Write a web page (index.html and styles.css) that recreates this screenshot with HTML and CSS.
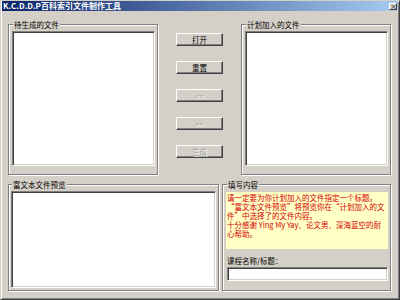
FILE: index.html
```html
<!DOCTYPE html>
<html lang="zh-CN">
<head>
  <meta charset="UTF-8">
  <title>K.C.D.D.P百科索引文件制作工具</title>
  <link rel="stylesheet" href="styles.css">
</head>
<body>
  <!-- 主窗口 -->
  <div class="window">
    <div class="titlebar">
      <span class="title">K.C.D.D.P百科索引文件制作工具</span>
      <span class="close">×</span>
    </div>

    <div class="client">
      <!-- 上半部分：文件列表与操作按钮 -->
      <div class="top-row">
        <fieldset class="group group-list">
          <legend>待生成的文件</legend>
          <div class="listbox"></div>
        </fieldset>

        <div class="actions">
          <button>打开</button>
          <button>重置</button>
          <button disabled>&lt;&lt;</button>
          <button disabled>&gt;&gt;</button>
          <button disabled>生成</button>
        </div>

        <fieldset class="group group-list">
          <legend>计划加入的文件</legend>
          <div class="listbox"></div>
        </fieldset>
      </div>

      <!-- 下半部分：预览与填写内容 -->
      <div class="bottom-row">
        <fieldset class="group group-preview">
          <legend>富文本文件预览</legend>
          <div class="listbox"></div>
        </fieldset>

        <fieldset class="group group-info">
          <legend>填写内容</legend>
          <div class="notice">
            请一定要为你计划加入的文件指定一个标题。<br>
            “富文本文件预览”将预览你在“计划加入的文件”中选择了的文件内容。<br>
            十分感谢 Ying My Yay、论文男、深海蓝空的耐心帮助。
          </div>
          <label class="field-label" for="titleInput">课程名称/标题：</label>
          <input type="text" id="titleInput" class="edit">
        </fieldset>
      </div>
    </div>
  </div>
</body>
</html>
```

FILE: styles.css
```css
/* 基本重置 */
* { box-sizing: border-box; margin: 0; padding: 0; }
body {
  font-family: "Noto Sans CJK SC", "Liberation Sans", sans-serif;
  font-size: 7.5px;
  background: #d4d0c8;
}

/* 窗口框架 */
.window {
  width: 400px;
  height: 300px;
  background: #d4d0c8;
  border: 1px solid;
  border-color: #d4d0c8 #404040 #404040 #d4d0c8;
  box-shadow: inset 1px 1px 0 #fff, inset -1px -1px 0 #808080;
  padding: 0 1px 1px 1px;
}
.titlebar {
  height: 10px;
  display: flex;
  align-items: center;
  justify-content: space-between;
  padding: 0 1px 0 1px;
  background: linear-gradient(to right, #0a246a, #a6caf0);
  color: #fff;
  font-weight: bold;
  font-size: 8px;
  line-height: 10px;
}
.close {
  width: 8px;
  height: 7px;
  background: #d4d0c8;
  border: 1px solid;
  border-color: #fff #404040 #404040 #fff;
  color: #000;
  font-size: 7px;
  line-height: 5px;
  text-align: center;
  font-weight: normal;
}
.client {
  padding: 9px 7px 0 6px;
}

/* 分组框 */
.group {
  border: 1px solid #808080;
  box-shadow: 1px 1px 0 #fff, inset 1px 1px 0 #fff;
  display: flex;
  flex-direction: column;
  min-width: 0;
}
.group legend {
  margin-left: 1px;
  padding: 0 1px;
  line-height: 9px;
  color: #000;
  background: #d4d0c8;
}
.listbox {
  flex: 1;
  background: #fff;
  border: 1px solid;
  border-color: #808080 #fff #fff #808080;
  box-shadow: inset 1px 1px 0 #404040, inset -1px -1px 0 #d4d0c8;
}

.top-row {
  display: flex;
  height: 155px;
}
.group-list {
  width: 150px;
  padding: 2px 2px 8px 3px;
}
.actions {
  flex: 1;
  display: flex;
  flex-direction: column;
  align-items: center;
  gap: 15px;
  padding-top: 13px;
}
.actions button {
  width: 47px;
  height: 13px;
  font-family: inherit;
  font-size: 7.5px;
  line-height: 9px;
  color: #000;
  background: #d4d0c8;
  border: 1px solid;
  border-color: #fff #404040 #404040 #fff;
  box-shadow: inset -1px -1px 0 #808080;
}
.actions button:disabled {
  color: #a0a0a0;
  text-shadow: 1px 1px 0 #fff;
}

.bottom-row {
  display: flex;
  gap: 3px;
  height: 111px;
  margin-top: 5px;
}
.group-preview {
  width: 211px;
  padding: 2px 2px 2px 2px;
}
.group-info {
  flex: 1;
  padding: 3px 2px 9px 3px;
}
.notice {
  height: 57px;
  padding: 1px 1px;
  background: #ffffc6;
  color: #d40000;
  line-height: 9px;
}
.field-label {
  margin-top: 7px;
  margin-left: 1px;
  line-height: 9px;
}
.edit {
  height: 14px;
  margin-top: 2px;
  margin-left: 1px;
  background: #fff;
  border: 1px solid;
  border-color: #808080 #fff #fff #808080;
  box-shadow: inset 1px 1px 0 #404040, inset -1px -1px 0 #d4d0c8;
  outline: none;
}
```
